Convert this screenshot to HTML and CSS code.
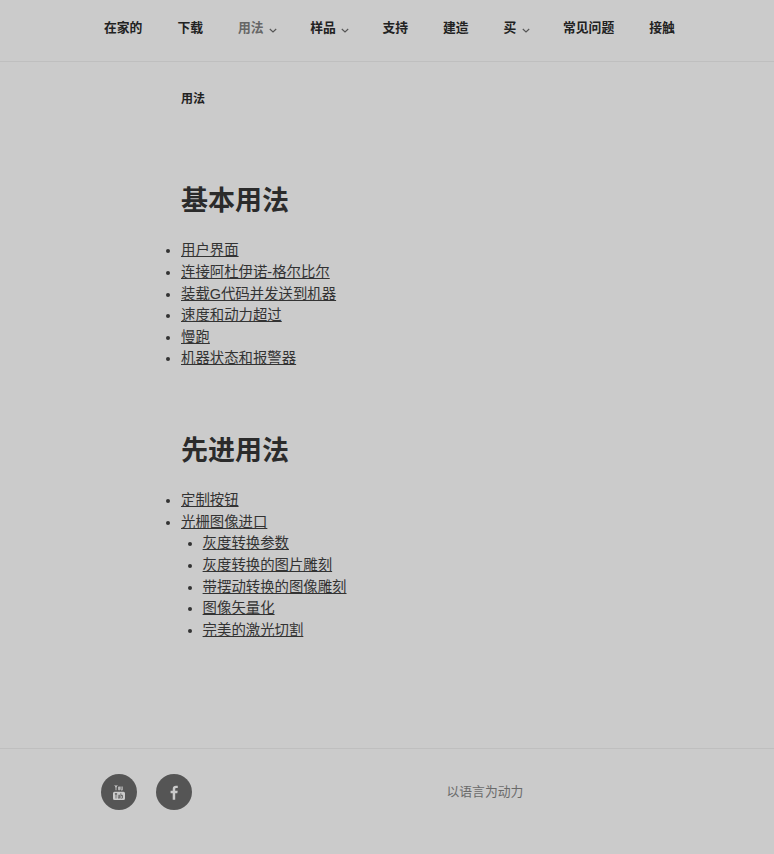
FILE: index.html
```html
<!DOCTYPE html>
<html lang="zh">
<head>
  <meta charset="UTF-8">
  <meta name="viewport" content="width=device-width, initial-scale=1.0">
  <title>用法</title>
  <link rel="stylesheet" href="styles.css">
</head>
<body>
  <header class="site-header">
    <nav class="main-nav">
      <a href="#">在家的</a>
      <a href="#">下载</a>
      <a href="#" class="current has-sub">用法<svg class="chevron" viewBox="0 0 8 5"><path d="M.8 1L4 4l3.200-3"/></svg></a>
      <a href="#" class="has-sub">样品<svg class="chevron" viewBox="0 0 8 5"><path d="M.8 1L4 4l3.200-3"/></svg></a>
      <a href="#">支持</a>
      <a href="#">建造</a>
      <a href="#" class="has-sub">买<svg class="chevron" viewBox="0 0 8 5"><path d="M.8 1L4 4l3.200-3"/></svg></a>
      <a href="#">常见问题</a>
      <a href="#">接触</a>
    </nav>
  </header>

  <main class="content">
    <h1 class="page-title">用法</h1>

    <h2>基本用法</h2>
    <ul>
      <li><a href="#">用户界面</a></li>
      <li><a href="#">连接阿杜伊诺-格尔比尔</a></li>
      <li><a href="#">装载G代码并发送到机器</a></li>
      <li><a href="#">速度和动力超过</a></li>
      <li><a href="#">慢跑</a></li>
      <li><a href="#">机器状态和报警器</a></li>
    </ul>

    <h2>先进用法</h2>
    <ul>
      <li><a href="#">定制按钮</a></li>
      <li><a href="#">光栅图像进口</a>
        <ul>
          <li><a href="#">灰度转换参数</a></li>
          <li><a href="#">灰度转换的图片雕刻</a></li>
          <li><a href="#">带摆动转换的图像雕刻</a></li>
          <li><a href="#">图像矢量化</a></li>
          <li><a href="#">完美的激光切割</a></li>
        </ul>
      </li>
    </ul>
  </main>

  <footer class="site-footer">
    <div class="social">
      <a href="#" class="social-btn">
        <svg viewBox="0 0 16 20" width="12" height="15">
          <path class="yt-box" fill-rule="evenodd" d="M2 9h12a2 2 0 0 1 2 2v7a2 2 0 0 1-2 2H2a2 2 0 0 1-2-2v-7a2 2 0 0 1 2-2zM2.500 11v1.500h1V18h1v-5.500h1V11zM6.500 13v4.200c0 .6.700 1 1.500.3v.5h1v-5H8v3.600c-.3.400-.6.400-.6 0V13zM10 11v7h1v-.4c.7.800 2 .6 2-.6v-2.800c0-1.200-1.300-1.300-2-.6V11zM11 14.500c.3-.4 1-.4 1 .1V17c0 .5-.7.500-1 .1z"/>
          <path class="yt-text" d="M2.500 0l1.500 3.500V7M5.500 0L4 3.500M7.500 2.500h1.300v4H7.500zM10.500 2v4c0 .8 1 .8 1.600 0M12.300 2v5"/>
        </svg>
      </a>
      <a href="#" class="social-btn">
        <svg viewBox="0 0 10 18" width="8" height="15">
          <path class="fb" d="M6.500 18V10h2.700l.4-3.100H6.500V5c0-.9.300-1.500 1.600-1.500h1.600V.7C9.400.7 8.500.6 7.400.6 5 .6 3.400 2 3.400 4.600v2.300H.7V10h2.700v8z"/>
        </svg>
      </a>
    </div>
    <p class="powered">以语言为动力</p>
  </footer>
</body>
</html>
```

FILE: styles.css
```css
html, body {
  margin: 0;
  padding: 0;
}

body {
  background: #cbcbcb;
  color: #333;
  font-family: "Liberation Sans", "Noto Sans CJK SC", sans-serif;
  font-size: 14.4px;
  line-height: 21.6px;
}

a {
  color: inherit;
}

.site-header {
  height: 61px;
  border-bottom: 1px solid #bfbfbf;
}

.main-nav {
  display: flex;
  align-items: center;
  gap: 35px;
  height: 56px;
  padding-left: 104px;
  font-size: 12.8px;
  font-weight: 700;
  color: #222;
}

.main-nav a {
  text-decoration: none;
  white-space: nowrap;
}

.main-nav a.current {
  color: #666;
}

.chevron {
  width: 8px;
  height: 5px;
  margin: 0 -1.9px 0 5.5px;
  vertical-align: -1px;
  fill: none;
  stroke: #555;
  stroke-width: 1.1;
}

.content {
  height: 686px;
  padding-left: 181px;
}

.page-title {
  margin: 0 0 11.2px;
  padding-top: 27px;
  font-size: 12px;
  line-height: 20px;
  font-weight: 700;
  color: #222;
}

h2 {
  margin: 0;
  padding-top: 63.8px;
  padding-bottom: 22.4px;
  font-size: 27px;
  line-height: 34px;
  font-weight: 700;
  color: #2b2b2b;
}

.content ul {
  margin: 0;
  padding: 0;
  list-style: disc;
}

.content ul ul {
  padding-left: 21.6px;
}

.site-footer {
  display: flex;
  align-items: center;
  height: 86px;
  border-top: 1px solid #bfbfbf;
  padding-left: 101px;
}

.social {
  display: flex;
  gap: 19px;
}

.social-btn {
  display: flex;
  align-items: center;
  justify-content: center;
  width: 36px;
  height: 36px;
  border-radius: 50%;
  background: #555;
}

.yt-box, .fb {
  fill: #cbcbcb;
}

.yt-text {
  fill: none;
  stroke: #cbcbcb;
  stroke-width: 1.2;
}

.powered {
  margin: 0 0 0 254.5px;
  font-size: 12.8px;
  color: #6a6a6a;
}
```
